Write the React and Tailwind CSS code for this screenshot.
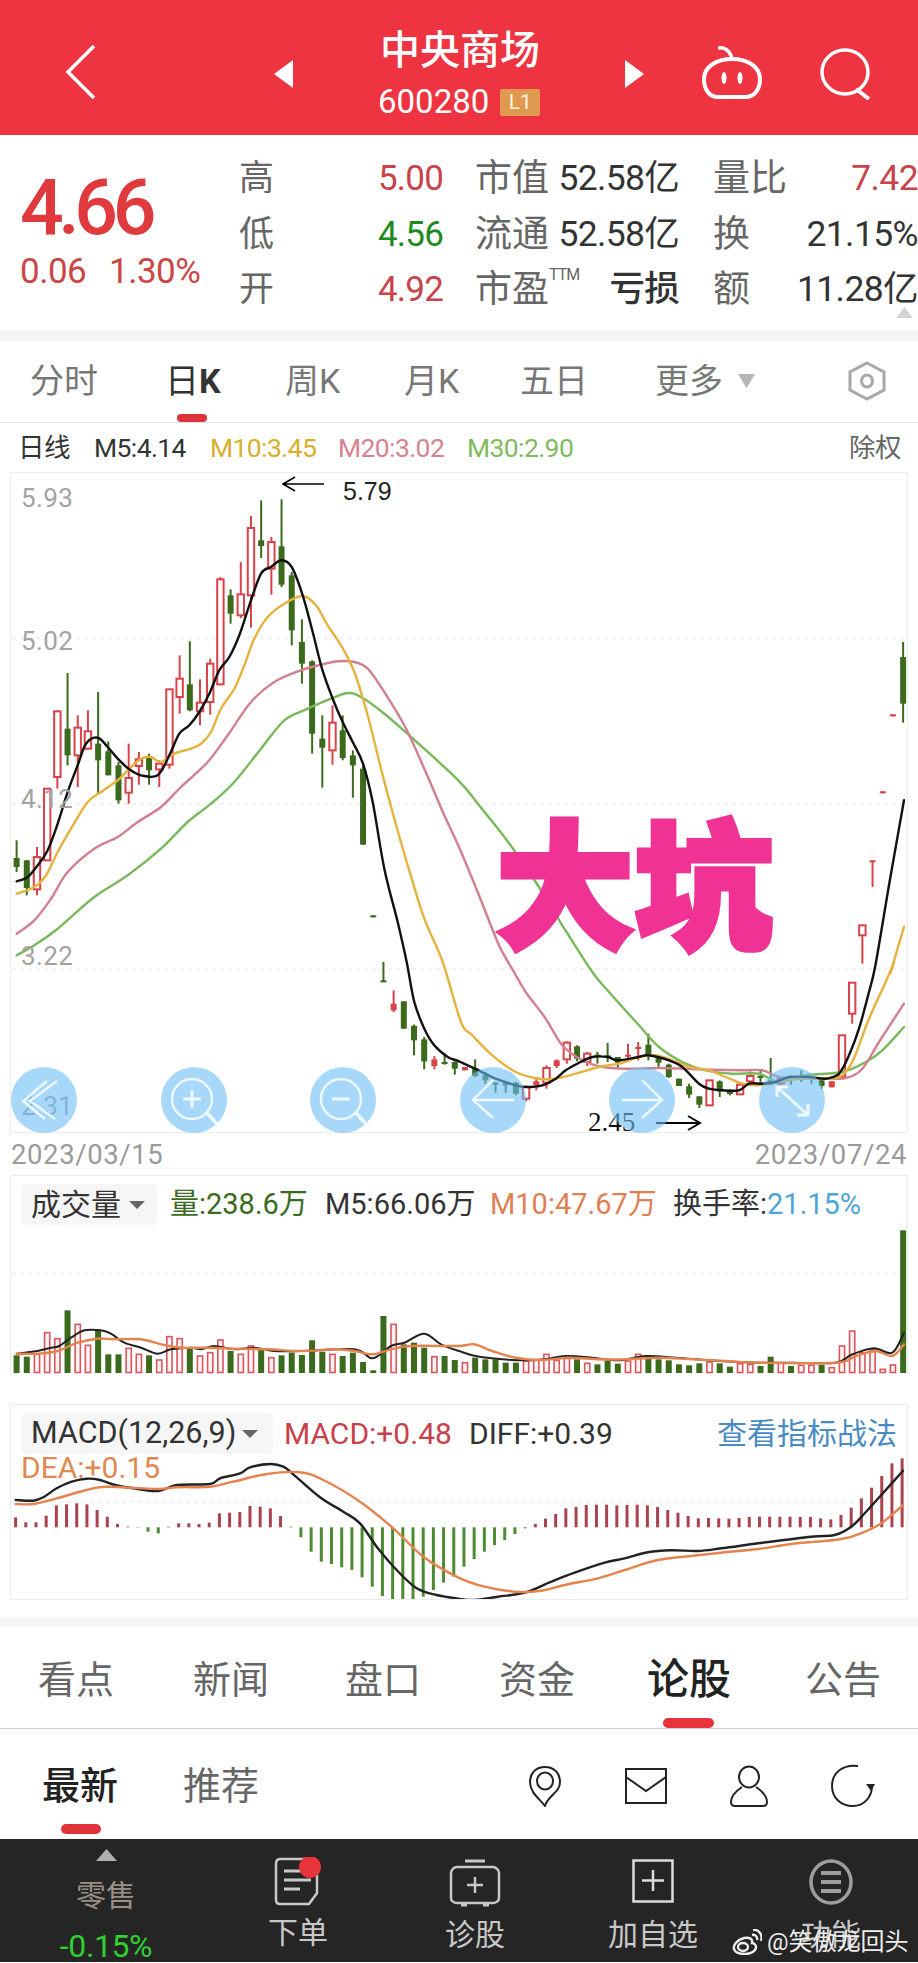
import React from "react";

const A = (x, y) => [x / 3, 470 + y / 3];
const B = (x, y) => [x / 3, 960 + y / 3];
const C = (x, y) => [458 + x / 3, 470 + y / 3];
const D = (x, y) => [458 + x / 3, 960 + y / 3];
const E = (x, y) => [x / 3, 1380 + y / 3];
const F = (x, y) => [458 + x / 3, 1380 + y / 3];
const seq = (fn, arr) => arr.map(([x, y]) => fn(x, y));

// Catmull-Rom smoothing so hand-read line samples render as curves
const smooth = (p) => {
  let d = `M${p[0][0].toFixed(1)} ${p[0][1].toFixed(1)}`;
  for (let i = 0; i < p.length - 1; i++) {
    const p0 = p[i - 1] || p[i];
    const p1 = p[i];
    const p2 = p[i + 1];
    const p3 = p[i + 2] || p2;
    const c1x = p1[0] + (p2[0] - p0[0]) / 6;
    const c1y = p1[1] + (p2[1] - p0[1]) / 6;
    const c2x = p2[0] - (p3[0] - p1[0]) / 6;
    const c2y = p2[1] - (p3[1] - p1[1]) / 6;
    d += `C${c1x.toFixed(1)} ${c1y.toFixed(1)} ${c2x.toFixed(1)} ${c2y.toFixed(1)} ${p2[0].toFixed(1)} ${p2[1].toFixed(1)}`;
  }
  return d;
};

const cx = (i) => 15.6 + 10.19 * i;
const RED = "#d8434a";
const GREEN = "#3b6a1d";

const c1 = [
  [1105,1158,1185,1200,"g"],[1165,1165,1248,1270,"g"],[1125,1155,1252,1270,"r"],[948,950,1165,1165,"r"],[715,718,915,950,"r"],
  [603,770,850,880,"g"],[730,767,850,945,"r"],[715,778,830,830,"r"],[660,815,865,965,"g"],[808,838,910,910,"g"],
  [870,880,985,995,"g"],[815,918,962,995,"r"],[840,862,882,938,"r"],[845,855,895,938,"g"],[865,875,892,945,"r"],
  [650,652,878,890,"r"],[550,620,675,725,"r"],[508,637,715,718,"g"],[622,692,718,760,"r"],[560,575,690,728,"r"],
  [315,322,637,640,"r"],[352,370,425,455,"g"],[270,367,430,438,"r"],[132,168,370,467,"r"],[85,205,222,258,"g"],
  [195,210,290,368,"r"],[82,223,338,345,"g"],[300,310,475,520,"g"],[442,510,575,635,"g"],[565,568,785,845,"g"],
  [730,800,827,947,"g"],[700,752,835,878,"r"],[730,775,858,865,"g"],[835,850,880,977,"g"],[880,890,1118,1118,"g"],
  [1330,1330,1336,1336,"g"],
];
const c2 = [
  [0,55,60,60,"g"],[85,125,145,150,"R"],[118,118,200,200,"g"],[188,192,235,280,"g"],[225,232,298,322,"g"],
  [282,292,312,322,"R"],[275,300,305,308,"g"],[298,300,320,338,"g"],
];
const c3 = [
  [315,315,325,325,"R"],[292,320,342,345,"g"],[330,340,355,365,"g"],[360,362,368,392,"g"],[360,362,370,392,"g"],
  [360,362,395,400,"g"],[370,375,410,418,"r"],[345,358,370,385,"R"],[310,318,362,380,"r"],[292,295,312,318,"R"],
  [238,242,292,305,"r"],[250,253,290,298,"g"],[270,275,300,312,"r"],[270,278,285,305,"g"],[243,280,284,300,"g"],
  [285,285,302,318,"g"],[245,278,282,295,"R"],[240,255,258,295,"R"],[215,248,278,295,"g"],[288,288,302,315,"g"],
  [305,308,345,348,"g"],[350,350,372,372,"g"],[365,373,398,408,"g"],[403,403,428,438,"g"],[355,355,430,432,"r"],
  [355,358,388,405,"g"],[382,390,394,400,"g"],[362,368,397,397,"r"],[328,342,358,365,"r"],[322,342,348,368,"g"],
  [288,355,362,370,"g"],[345,350,365,370,"r"],[340,342,350,368,"g"],[325,342,346,360,"g"],[345,345,350,365,"g"],
  [345,355,372,380,"g"],[358,358,376,376,"R"],[218,220,345,350,"r"],[62,62,155,185,"r"],
];
const c4 = [
  [1360,1360,1390,1475,"r"],[1165,1165,1170,1245,"R"],[958,958,964,964,"R"],[727,727,733,733,"R"],[510,555,695,752,"g"],
];
const candles = [
  ...c1.map((c) => [...c.slice(0, 4).map((v) => 470 + v / 3), c[4]]),
  ...c2.map((c) => [...c.slice(0, 4).map((v) => 960 + v / 3), c[4]]),
  ...c3.map((c) => [...c.slice(0, 4).map((v) => 960 + v / 3), c[4]]),
  ...c4.map((c) => [...c.slice(0, 4).map((v) => 470 + v / 3), c[4]]),
];

const ma5 = [
  ...seq(A, [[47,1228],[80,1215],[110,1180],[140,1135],[170,1055],[200,960],[230,880],[255,815],[290,797],[320,825],[350,860],[385,892],[420,910],[470,910],[505,850],[535,785],[565,760],[595,720],[625,665],[655,595],[685,555],[715,490],[745,400],[780,305],[810,285],[841,265],[872,285],[905,370],[935,480],[963,590],[995,680],[1025,750],[1055,810],[1086,875],[1115,990],[1150,1190],[1190,1350],[1217,1470]]),
  ...seq(B, [[1240,120],[1270,200],[1300,250],[1340,285],[1374,298]]),
  ...seq(D, [[48,320],[110,350],[171,370],[200,375],[250,370],[290,350],[320,325],[355,305],[400,285],[446,285],[477,295],[538,285],[568,280],[630,295],[670,315],[720,365],[750,380],[790,385],[840,385],[870,365],[910,365],[950,360],[990,345],[1050,345],[1100,350],[1140,335],[1170,280],[1200,200],[1230,90],[1250,5]]),
  ...seq(C, [[1290,1240],[1335,985]]),
];
const ma10 = [
  ...seq(A, [[47,1265],[100,1245],[135,1210],[170,1140],[210,1070],[260,990],[300,960],[350,925],[385,890],[420,860],[450,855],[480,870],[520,845],[570,830],[600,815],[630,780],[660,710],[700,650],[730,580],[760,500],[800,435],[850,395],[905,372],[945,400],[980,460],[1020,520],[1060,600],[1100,730],[1140,890],[1180,1040],[1220,1180],[1270,1340],[1325,1470]]),
  ...seq(B, [[1380,180]]),
  ...seq(D, [[40,220],[100,280],[170,330],[240,350],[290,350],[350,335],[420,315],[480,305],[540,285],[590,280],[640,295],[690,315],[750,325],[800,345],[850,365],[900,370],[960,360],[1020,350],[1090,350],[1140,345],[1180,300],[1230,170],[1280,60],[1305,0]]),
  ...seq(C, [[1295,1500],[1335,1365]]),
];
const ma20 = [
  ...seq(A, [[47,1385],[100,1345],[150,1280],[200,1200],[280,1130],[350,1095],[410,1050],[480,1005],[540,945],[620,870],[680,790],[750,690],[820,630],[900,595],[960,578],[1010,568],[1060,570],[1100,590],[1150,660],[1210,760],[1270,890],[1330,1030]]),
  ...seq(C, [[0,1125],[60,1270],[120,1420],[165,1500]]),
  ...seq(D, [[200,90],[260,170],[310,250],[370,295],[430,315],[500,320],[600,318],[680,320],[750,323],[850,325],[910,325],[960,345],[1020,350],[1090,350],[1160,348],[1210,320],[1260,240],[1335,125]]),
];
const ma30 = [
  ...seq(A, [[47,1450],[100,1420],[170,1370],[280,1275],[380,1210],[480,1130],[560,1050],[630,995],[700,930],[780,830],[850,745],[920,710],[990,680],[1040,663],[1080,675],[1150,725],[1230,795],[1372,925]]),
  ...seq(C, [[60,1000],[140,1100],[230,1230],[310,1360],[400,1500]]),
  ...seq(D, [[450,90],[540,190],[600,255],[670,300],[740,325],[820,335],[900,335],[960,360],[1040,340],[1150,330],[1220,300],[1270,265],[1335,195]]),
];

const vol = [
  [1183,"g"],[1187,"g"],[1180,"r"],[1115,"r"],[1133,"r"],[1048,"g"],[1090,"r"],[1153,"r"],[1110,"g"],[1180,"g"],[1180,"g"],[1162,"r"],[1180,"r"],[1183,"g"],[1197,"r"],[1127,"r"],[1133,"r"],[1160,"g"],[1185,"r"],[1175,"r"],[1137,"r"],[1170,"g"],[1180,"r"],[1155,"r"],[1165,"g"],[1190,"r"],[1183,"g"],[1175,"g"],[1182,"g"],[1138,"g"],[1172,"g"],[1180,"r"],[1185,"g"],[1175,"g"],[1203,"g"],[1228,"g"],[1065,"g"],[1090,"r"],[1150,"g"],[1145,"g"],[1160,"g"],[1187,"r"],[1185,"g"],[1197,"g"],
  [1205,"r"],[1190,"g"],[1195,"g"],[1195,"g"],[1205,"g"],[1205,"g"],[1200,"r"],[1198,"r"],[1180,"r"],[1198,"r"],[1192,"r"],[1195,"g"],[1207,"r"],[1210,"g"],[1200,"g"],[1208,"g"],[1200,"r"],[1180,"r"],[1190,"g"],[1195,"g"],[1198,"g"],[1210,"g"],[1213,"g"],[1207,"g"],[1203,"r"],[1207,"g"],[1217,"g"],[1208,"r"],[1210,"r"],[1215,"g"],[1187,"g"],[1205,"r"],[1215,"g"],[1213,"r"],[1213,"r"],[1212,"g"],[1220,"r"],[1155,"r"],[1110,"r"],[1175,"r"],[1165,"r"],[1225,"r"],[1212,"r"],[808,"g"],
];
const volBlack = [
  ...seq(B, [[47,1178],[110,1170],[150,1160],[175,1155],[210,1130],[250,1108],[300,1108],[330,1118],[370,1145],[420,1160],[470,1178],[510,1165],[570,1160],[600,1165],[640,1155],[700,1165],[760,1160],[820,1170],[900,1170],[1060,1165],[1115,1192],[1170,1155],[1210,1145],[1270,1118],[1320,1150]]),
  ...seq(D, [[0,1170],[50,1185],[130,1195],[200,1198],[260,1195],[320,1185],[400,1190],[480,1198],[560,1185],[650,1190],[780,1200],[900,1205],[1000,1205],[1130,1205],[1180,1180],[1245,1162],[1300,1175],[1335,1115]]),
];
const volOrange = [
  ...seq(B, [[47,1178],[110,1178],[170,1170],[230,1145],[290,1133],[340,1135],[420,1135],[480,1150],[540,1160],[620,1160],[700,1163],[800,1165],[900,1170],[1000,1165],[1060,1170],[1115,1180],[1170,1165],[1230,1155],[1374,1155]]),
  ...seq(D, [[45,1150],[100,1170],[170,1190],[250,1197],[330,1190],[420,1195],[500,1195],[600,1190],[700,1195],[800,1200],[900,1205],[1130,1205],[1190,1185],[1250,1170],[1300,1185],[1335,1150]]),
];

const hist = [412,427,427,407,376,373,370,373,390,410,432,440,441,455,460,440,430,430,432,428,400,398,396,378,380,385,408,440,472,515,545,552,562,570,592,620,648,662,662,662,650,630,608,590,560,537,515,495,480,462,445,432,416,402,385,381,375,374,374,376,375,374,376,381,390,398,408,415,414,415,416,414,411,410,410,410,410,411,411,415,418,405,383,355,323,288,250,235];
const macdBlack = [
  ...seq(E, [[47,360],[100,362],[130,352],[170,325],[215,305],[260,296],[300,300],[345,315],[400,325],[475,333],[530,315],[630,312],[660,295],[720,280],[750,262],[810,252],[850,260],[880,283],[960,352],[1030,395],[1080,430],[1130,500],[1190,570],[1250,625],[1310,645],[1374,656]]),
  ...seq(F, [[50,660],[120,650],[200,638],[280,605],[350,578],[440,548],[500,535],[570,517],[640,511],[720,513],[790,505],[900,490],[1060,470],[1130,465],[1180,440],[1220,400],[1270,345],[1335,272]]),
];
const macdOrange = [
  ...seq(E, [[47,372],[100,372],[170,355],[260,330],[320,320],[470,327],[530,322],[630,320],[700,305],[800,282],[900,277],[970,300],[1080,365],[1180,445],[1270,530],[1374,592]]),
  ...seq(F, [[80,620],[170,635],[250,632],[320,615],[420,595],[500,570],[600,540],[700,528],[800,517],[900,507],[1000,492],[1150,477],[1220,455],[1270,430],[1335,375]]),
];

function Line({ pts, color, w = 2 }) {
  return <path d={smooth(pts)} fill="none" stroke={color} strokeWidth={w} strokeLinejoin="round" strokeLinecap="round" />;
}

function KLine() {
  return (
    <svg width="897" height="661" viewBox="10 471 897 661" className="absolute inset-0 block">
      {[636, 802, 967].map((y) => (
        <line key={y} x1="11" x2="906" y1={y} y2={y} stroke="#e4e4e4" strokeWidth="1" strokeDasharray="4 4" />
      ))}
      {candles.map(([hi, top, bot, lo, t], i) => {
        const x = cx(i);
        const color = t === "g" ? GREEN : RED;
        return (
          <g key={i}>
            <line x1={x} x2={x} y1={hi} y2={lo} stroke={color} strokeWidth="2" />
            {t === "r" ? (
              <rect x={x - 3.2} y={top} width="6.4" height={Math.max(bot - top, 1)} fill="#fff" stroke={color} strokeWidth="2" />
            ) : (
              <rect x={x - 3} y={top} width="6" height={Math.max(bot - top, 2)} fill={color} />
            )}
          </g>
        );
      })}
      <Line pts={ma30} color="#7ab85c" w={2.4} />
      <Line pts={ma20} color="#d27f90" w={2.4} />
      <Line pts={ma10} color="#e6b23d" w={2.4} />
      <Line pts={ma5} color="#111111" w={2.4} />
      <g stroke="#000" strokeWidth="1.6" fill="none">
        <path d="M323 482H283M294 475L282 482L294 489" />
        <path d="M655 1121H698M687 1114L699 1121L687 1128" strokeWidth="2" />
      </g>
    </svg>
  );
}

function VolumeChart() {
  return (
    <svg width="897" height="200" viewBox="10 1175 897 200" className="absolute inset-0 block">
      <line x1="11" x2="906" y1="1273" y2="1273" stroke="#e4e4e4" strokeDasharray="4 4" />
      {vol.map(([t, k], i) => {
        const x = cx(i);
        const y = 960 + t / 3;
        return k === "g" ? (
          <rect key={i} x={x - 3} y={y} width="6" height={1372 - y} fill={GREEN} />
        ) : (
          <rect key={i} x={x - 2.6} y={y} width="5.2" height={1371.5 - y} fill="#fff3f3" stroke="#d9565d" strokeWidth="1.6" />
        );
      })}
      <Line pts={volBlack} color="#222222" />
      <Line pts={volOrange} color="#e5834f" w={2.4} />
    </svg>
  );
}

function MacdChart() {
  return (
    <svg width="895" height="194" viewBox="11 1405 895 194" className="absolute inset-0 block">
      <line x1="11" x2="906" y1="1502" y2="1502" stroke="#e4e4e4" strokeDasharray="4 4" />
      {hist.map((t, i) => {
        const x = cx(i);
        const y = 1380 + t / 3;
        const base = 1380 + 442 / 3;
        return <line key={i} x1={x} x2={x} y1={base} y2={y} stroke={t < 442 ? "#a8434f" : "#4d8a32"} strokeWidth="3" />;
      })}
      <Line pts={macdBlack} color="#222222" w={2.4} />
      <Line pts={macdOrange} color="#e5834f" w={2.4} />
    </svg>
  );
}

function RoundBtn({ children }) {
  return (
    <div className="w-[66px] h-[66px] rounded-full bg-[#6dbef7]/60 flex items-center justify-center">
      <svg width="66" height="66" viewBox="0 0 66 66" fill="none" stroke="#eef8ff" strokeWidth="2.4">
        {children}
      </svg>
    </div>
  );
}

const Lens = ({ children }) => (
  <>
    <circle cx="31" cy="32" r="20" />
    <path d="M46 46L56 57" strokeWidth="3.5" />
    {children}
  </>
);

function Tri({ dir = "down", color, w, h }) {
  const d = dir === "down" ? "M0 0H10L5 10Z" : dir === "up" ? "M5 0L10 10H0Z" : dir === "left" ? "M10 0V10L0 5Z" : "M0 0V10L10 5Z";
  return (
    <svg width={w} height={h} viewBox="0 0 10 10" preserveAspectRatio="none" className="block shrink-0">
      <path d={d} fill={color} />
    </svg>
  );
}

const Row = ({ label, value, valueClass, l2, v2, l3, v3 }) => (
  <>
    <div className="text-[35px] text-[#666]">{label}</div>
    <div className={"text-[35px] tracking-[-0.8px] " + valueClass}>{value}</div>
    <div className="text-[37px] text-[#666] whitespace-nowrap -ml-[2px]">{l2}</div>
    <div className="text-[35.5px] text-[#333] text-right pr-[34px] tracking-[-0.7px] whitespace-nowrap">{v2}</div>
    <div className="text-[37px] text-[#666] whitespace-nowrap">{l3}</div>
    <div className={"text-[35.5px] text-right whitespace-nowrap tracking-[-0.6px] " + (l3 === "量比" ? "text-[#c9434b]" : "text-[#333]")}>{v3}</div>
  </>
);

const periodTabs = [
  ["分时", "w-[165px] pl-[30px] text-[#777]"],
  ["日", "w-[120px] text-[#333]"],
  ["周K", "w-[119px] text-[#777]"],
  ["月K", "w-[116px] text-[#777]"],
  ["五日", "w-[135px] text-[#777]"],
];

function BottomItem({ icon, label, className }) {
  return (
    <div className={"flex flex-col items-center " + className}>
      <div className="h-[50px] flex items-start">{icon}</div>
      <div className="mt-[9px] text-[30px] leading-[34px] text-[#c8c8c8] whitespace-nowrap">{label}</div>
    </div>
  );
}

export default function App() {
  return (
    <div className="relative w-[918px] h-[1963px] overflow-hidden bg-white font-[Roboto,'Noto_Sans_CJK_SC',sans-serif]">
      {/* header */}
      <header className="h-[135px] bg-[#ee3440] flex items-start text-white">
        <svg width="29" height="54" viewBox="0 0 29 54" fill="none" stroke="#fff" strokeWidth="3.5" className="mt-[45px] ml-[66px]">
          <path d="M28 1L2 27L28 53" />
        </svg>
        <div className="mt-[60px] ml-[179px]"><Tri dir="left" color="#fff" w={19} h={28} /></div>
        <div className="ml-[87px] w-[163px] flex flex-col items-start">
          <div className="text-[40px] leading-[46px] mt-[28px] font-medium whitespace-nowrap">中央商场</div>
          <div className="flex items-center mt-[13px] -ml-[2px]">
            <span className="text-[33px] leading-[30px]">600280</span>
            <span className="ml-[11px] w-[40px] h-[27px] rounded-[2px] bg-[#e09a4f] text-[21px] leading-[27px] text-center text-[#fff3e0]">L1</span>
          </div>
        </div>
        <div className="mt-[60px] ml-[82px]"><Tri dir="right" color="#fff" w={19} h={28} /></div>
        <svg width="60" height="54" viewBox="0 0 60 54" fill="none" stroke="#fff" strokeWidth="4" className="mt-[46px] ml-[58px]">
          <path d="M16 2C24 1 29 6 30 14" strokeWidth="3.5" />
          <path d="M16 51H43C53 51 58 43 58 33C58 21 46 13 30 13C14 13 2 21 2 33C2 43 7 51 16 51Z" />
          <ellipse cx="22" cy="32" rx="2.5" ry="6" fill="#fff" stroke="none" />
          <ellipse cx="38" cy="32" rx="2.5" ry="6" fill="#fff" stroke="none" />
        </svg>
        <svg width="52" height="52" viewBox="0 0 52 52" fill="none" stroke="#fff" strokeWidth="3.5" className="mt-[48px] ml-[58px]">
          <ellipse cx="25" cy="24" rx="23" ry="22" />
          <path d="M36 41L49 51" strokeWidth="4" />
        </svg>
      </header>

      {/* price summary */}
      <section className="h-[195px] flex pt-[16px]">
        <div className="w-[239px] pl-[20px] pt-[18px] shrink-0">
          <div className="text-[77px] leading-[78px] font-medium text-[#e03a3f] tracking-[-5.4px]">4.66</div>
          <div className="mt-[6px] flex text-[35px] leading-[38px] text-[#cc4545] tracking-[-0.5px]">
            <span className="w-[89px]">0.06</span>
            <span>1.30%</span>
          </div>
        </div>
        <div className="relative flex-1 grid grid-cols-[139px_99px_80px_156px_1fr_auto] auto-rows-[55.5px] items-center leading-none">
          <Row label="高" value="5.00" valueClass="text-[#c9434b]" l2="市值" v2="52.58亿" l3="量比" v3="7.42" />
          <Row label="低" value="4.56" valueClass="text-[#1c8a1c]" l2="流通" v2="52.58亿" l3="换" v3="21.15%" />
          <Row label="开" value="4.92" valueClass="text-[#c9434b]" l2={<>市盈<sup className="text-[16px] align-[14px] tracking-[-1px]">TTM</sup></>} v2={<span className="font-medium">亏损</span>} l3="额" v3="11.28亿" />
          <div className="absolute right-[5px] top-[156px]"><Tri dir="up" color="#d4d4d4" w={17} h={11} /></div>
        </div>
      </section>
      <div className="h-[11px] bg-[#f5f5f5]" />

      {/* period tabs */}
      <nav className="relative h-[82px] border-b border-[#e4e4e4] flex items-center text-[34px] leading-none pb-[2px]">
        {periodTabs.map(([t, cls]) => (
          <div key={t} className={"shrink-0 whitespace-nowrap " + cls} >
            {t === "日" ? <>日<span className="font-bold">K</span></> : t}
          </div>
        ))}
        <div className="text-[#777] whitespace-nowrap">更多</div>
        <div className="ml-[15px]"><Tri color="#b5b5b5" w={17} h={14} /></div>
        <svg width="42" height="40" viewBox="0 0 42 40" fill="none" stroke="#a8a8a8" className="ml-[91px]">
          <path d="M21 2L38 11V29L21 38L4 29V11Z" strokeWidth="3" />
          <ellipse cx="21" cy="20" rx="5.5" ry="6" strokeWidth="3" />
        </svg>
        <div className="absolute left-[177px] bottom-0 w-[30px] h-[8px] rounded-full bg-[#e0333a]" />
      </nav>

      {/* MA legend */}
      <div className="h-[48px] flex items-center text-[26.5px] leading-none tracking-[-0.6px] pl-[18px] pt-[2px] whitespace-nowrap">
        <span className="text-[#333] w-[76px]">日线</span>
        <span className="text-[#333] w-[116px]">M5:4.14</span>
        <span className="text-[#d9ae2a] w-[128px]">M10:3.45</span>
        <span className="text-[#d9828f] w-[129px]">M20:3.02</span>
        <span className="text-[#7fba5d] w-[382px]">M30:2.90</span>
        <span className="text-[#666]">除权</span>
      </div>

      {/* kline chart */}
      <div className="px-[10px] mt-[1px]">
        <div className="relative h-[661px] border border-[#ececec]">
          <KLine />
          {[["5.93", "top-[10px]"], ["5.02", "top-[153px]"], ["4.12", "top-[311px]"], ["3.22", "top-[468px]"], ["2.31", "top-[618px]"]].map(([t, cls]) => (
            <span key={t} className={"absolute left-[10px] text-[26px] leading-[30px] text-[#a3a3a3] tracking-[0.4px] " + cls}>{t}</span>
          ))}
          <span className="absolute left-[332px] top-[3px] text-[25px] leading-[30px] text-[#222] font-['Liberation_Sans',sans-serif]">5.79</span>
          <span className="absolute left-[577px] top-[634px] text-[27px] leading-[30px] text-[#111] font-['Liberation_Serif',serif]">2.45</span>
          <div className="absolute left-0 top-[594px] flex gap-[83.6px]">
            <RoundBtn><path d="M46 14L19 34L44 52M36 14L12 34L34 52" /></RoundBtn>
            <RoundBtn><Lens><path d="M31 23V41M22 32H40" strokeWidth="3" /></Lens></RoundBtn>
            <RoundBtn><Lens><path d="M22 32H40" strokeWidth="3" /></Lens></RoundBtn>
            <RoundBtn><path d="M13 33H54M33 13L13 33L33 51" /></RoundBtn>
            <RoundBtn><path d="M13 33H53M33 13L53 33L33 51" /></RoundBtn>
            <RoundBtn><path d="M18 20L49 48M18 30V20H29M49 37V48H38" strokeWidth="3" /></RoundBtn>
          </div>
          <span className="absolute left-[486px] top-[329px] text-[136px] leading-[177px] tracking-[3px] font-black text-[#f03294] whitespace-nowrap [-webkit-text-stroke:7px_#f03294]">大坑</span>
        </div>
      </div>

      {/* dates */}
      <div className="h-[42px] px-[11px] flex items-start justify-between pt-[8px] text-[27.5px] leading-[28px] tracking-[0.6px] text-[#9a9a9a]">
        <span>2023/03/15</span>
        <span>2023/07/24</span>
      </div>

      {/* volume */}
      <div className="px-[10px]">
        <div className="relative h-[200px] border-t border-x border-[#ececec] whitespace-nowrap">
          <VolumeChart />
          <div className="absolute left-[10px] top-[8px] flex items-center text-[29px] leading-none">
            <div className="w-[136px] h-[41px] rounded-[5px] bg-[#f6f6f6] flex items-center pl-[10px] text-[#333] text-[30px]">
              成交量
              <span className="ml-[8px]"><Tri color="#666" w={16} h={8} /></span>
            </div>
            <span className="ml-[13px] text-[#3a6b1e] w-[155px]">量:238.6万</span>
            <span className="text-[#333] w-[165px]">M5:66.06万</span>
            <span className="text-[#df7f52] w-[183px]">M10:47.67万</span>
            <span className="text-[#333]">换手率:</span>
            <span className="text-[#4da5d6]">21.15%</span>
          </div>
        </div>
      </div>

      {/* macd */}
      <div className="px-[10px] mt-[29px]">
        <div className="relative h-[196px] border border-[#ececec] whitespace-nowrap">
          <MacdChart />
          <div className="absolute left-[10px] top-[8px] right-[10px] flex items-center text-[30px] leading-none">
            <div className="w-[252px] h-[41px] rounded-[5px] bg-[#f6f6f6] flex items-center pl-[10px] text-[#333] text-[30.5px]">
              MACD(12,26,9)
              <span className="ml-[6px]"><Tri color="#666" w={16} h={8} /></span>
            </div>
            <span className="ml-[11px] text-[#c8414a] w-[185px]">MACD:+0.48</span>
            <span className="text-[#333]">DIFF:+0.39</span>
            <span className="ml-auto text-[#4a8ac4] text-[30px]">查看指标战法</span>
          </div>
          <span className="absolute left-[10px] top-[49px] text-[30px] leading-[28px] text-[#e08850]">DEA:+0.15</span>
        </div>
      </div>

      <div className="mt-[17px] h-[10px] bg-[#f5f5f5]" />

      {/* info tabs */}
      <nav className="relative h-[102px] border-b border-[#cccccc] flex items-center pt-[4px] leading-none text-[38px] text-[#666] whitespace-nowrap">
        <span className="ml-[38px]">看点</span>
        <span className="ml-[79px]">新闻</span>
        <span className="ml-[76px]">盘口</span>
        <span className="ml-[78px]">资金</span>
        <span className="ml-[72px] text-[42px] font-medium text-[#222]">论股</span>
        <span className="ml-[74px]">公告</span>
        <div className="absolute left-[663px] bottom-0 w-[51px] h-[10px] rounded-full bg-[#e8333a]" />
      </nav>

      {/* sub tabs */}
      <div className="relative h-[110px] flex items-center pt-[4px] leading-none text-[38px] whitespace-nowrap">
        <span className="ml-[42px] font-medium text-[#222]">最新</span>
        <span className="ml-[65px] text-[#666]">推荐</span>
        <svg width="34" height="42" viewBox="0 0 34 42" fill="none" stroke="#222" strokeWidth="2" className="ml-[269px]">
          <path d="M17 41C12 34 2 28 2 17C2 8 8 2 17 2C26 2 32 8 32 17C32 28 20 30 17 41Z" />
          <ellipse cx="17" cy="16" rx="8" ry="8.5" />
        </svg>
        <svg width="44" height="38" viewBox="0 0 44 38" fill="none" stroke="#222" strokeWidth="2" className="ml-[62px]">
          <path d="M2 2H42V36H2Z" />
          <path d="M2 10L22 24L42 10" />
        </svg>
        <svg width="40" height="42" viewBox="0 0 40 42" fill="none" stroke="#222" strokeWidth="2" className="ml-[61px]">
          <ellipse cx="20" cy="12" rx="10" ry="10.5" />
          <path d="M13 22C7 26 2 31 2 37C2 40 4 41 6 41H34C36 41 38 40 38 37C38 31 33 26 27 22" />
        </svg>
        <svg width="46" height="44" viewBox="0 0 46 44" fill="none" stroke="#222" strokeWidth="2" className="ml-[61px]">
          <path d="M28 2C14 0 2 8 2 22C2 34 11 42 23 42C34 42 42 33 42 22" />
          <path d="M36 20H45L41 27Z" fill="#222" stroke="none" />
        </svg>
        <div className="absolute left-[61px] bottom-[5px] w-[40px] h-[10px] rounded-full bg-[#e0333a]" />
      </div>

      {/* bottom bar */}
      <footer className="relative h-[123px] bg-[#252525] flex items-start whitespace-nowrap">
        <div className="w-[212px] flex flex-col items-center pt-[10px]">
          <Tri dir="up" color="#b0b0b0" w={21} h={12} />
          <div className="mt-[19px] text-[30px] leading-[31px] text-[#9a8f85]">零售</div>
          <div className="mt-[20px] text-[32px] leading-[30px] text-[#2fd02f] tracking-[-0.4px]">-0.15%</div>
        </div>
        <BottomItem className="ml-[56px] pt-[18px] w-[60px]" label="下单" icon={
          <svg width="48" height="50" viewBox="0 0 48 50" fill="none" stroke="#c8c8c8" strokeWidth="2.5">
            <path d="M6 2H38C41 2 43 4 43 7V36L35 47H6C3 47 2 45 2 43V7C2 4 3 2 6 2Z" />
            <path d="M10 14H34M10 23H37M10 32H26" strokeWidth="3" />
            <circle cx="36" cy="10" r="11" fill="#e8333a" stroke="none" />
          </svg>
        } />
        <BottomItem className="ml-[117px] pt-[20px] w-[60px]" label="诊股" icon={
          <svg width="52" height="48" viewBox="0 0 52 48" fill="none" stroke="#c8c8c8" strokeWidth="2.5">
            <path d="M8 8H44C47 8 50 11 50 14V39C50 42 47 44 44 44H8C5 44 2 42 2 39V14C2 11 5 8 8 8Z" />
            <path d="M16 2H36" strokeWidth="3" />
            <path d="M26 18V34M18 26H34" />
            <path d="M12 46H18M34 46H40" strokeWidth="3" />
          </svg>
        } />
        <BottomItem className="ml-[103px] pt-[20px] w-[90px]" label="加自选" icon={
          <svg width="42" height="44" viewBox="0 0 42 44" fill="none" stroke="#dcdcdc" strokeWidth="2.5">
            <path d="M1.5 1.5H40.5V42.5H1.5Z" />
            <path d="M21 11V32M10 21.5H32" />
          </svg>
        } />
        <BottomItem className="ml-[103px] pt-[20px] w-[60px]" label="功能" icon={
          <svg width="44" height="46" viewBox="0 0 44 46" fill="none" stroke="#9e9e9e">
            <ellipse cx="22" cy="23" rx="20" ry="21" strokeWidth="3.5" />
            <path d="M12 14H32M12 23H32M12 32H32" strokeWidth="4" />
          </svg>
        } />
        <div className="absolute left-[732px] top-[87px] flex items-center text-[#eeeeee]">
          <svg width="30" height="26" viewBox="0 0 30 26" fill="none" stroke="#eee" strokeWidth="2.4">
            <path d="M12 9C5 11 1 16 2 20C3 24 8 25 13 25C19 25 24 22 24 18C24 15 21 14 20 14C21 10 18 8 12 9Z" fill="#252525" />
            <ellipse cx="11" cy="18" rx="5" ry="4" />
            <path d="M20 6C23 5 26 8 25 11M21 1C27 0 31 6 29 12" />
          </svg>
          <span className="ml-[5px] text-[24px] leading-[32px]">@笑傲龙回头</span>
        </div>
      </footer>
    </div>
  );
}
